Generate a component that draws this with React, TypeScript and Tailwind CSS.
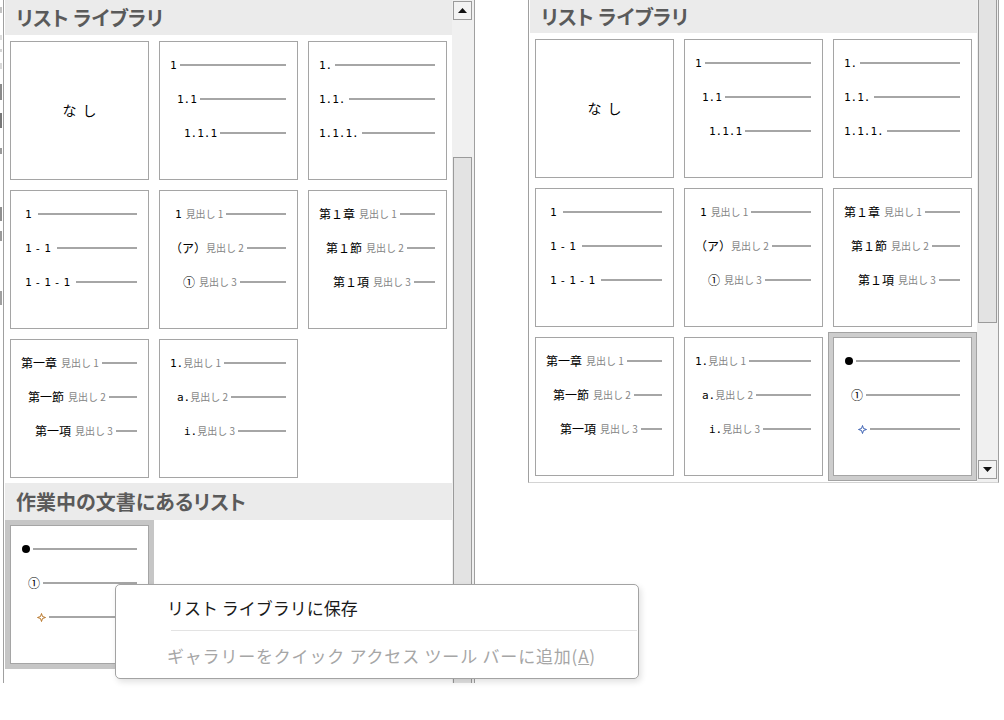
import React from 'react';

type Part = { t: string; k: 'b' | 'd' | 'k' | 'g' | 'G' | 'dot' | 'starO' | 'starB' };
type Row = { pl: string; parts: Part[] };

const partClass: Record<string, string> = {
	b: "font-['DejaVu_Sans_Mono','Noto_Sans_CJK_JP',monospace] text-[11px] leading-none text-black",
	d: "font-['DejaVu_Sans_Mono','Noto_Sans_CJK_JP',monospace] text-[11px] leading-none tracking-[3px] text-black",
	k: "font-['Noto_Sans_CJK_JP',sans-serif] text-[12px] leading-none text-black",
	g: "ml-[4px] font-['Noto_Sans_CJK_JP',sans-serif] text-[10px] leading-none text-[#858585]",
	G: "font-['Noto_Sans_CJK_JP',sans-serif] text-[10px] leading-none text-[#858585]",
};

const numbered: Row[] = [
	{ pl: 'pl-[10px]', parts: [{ t: '1', k: 'b' }] },
	{ pl: 'pl-[17px]', parts: [{ t: '1.1', k: 'b' }] },
	{ pl: 'pl-[24px]', parts: [{ t: '1.1.1', k: 'b' }] },
];

const numberedDot: Row[] = [
	{ pl: 'pl-[10px]', parts: [{ t: '1.', k: 'b' }] },
	{ pl: 'pl-[10px]', parts: [{ t: '1.1.', k: 'b' }] },
	{ pl: 'pl-[10px]', parts: [{ t: '1.1.1.', k: 'b' }] },
];

const dashed: Row[] = [
	{ pl: 'pl-[14px]', parts: [{ t: '1', k: 'd' }] },
	{ pl: 'pl-[14px]', parts: [{ t: '1-1', k: 'd' }] },
	{ pl: 'pl-[14px]', parts: [{ t: '1-1-1', k: 'd' }] },
];

const headingKana: Row[] = [
	{ pl: 'pl-[15px]', parts: [{ t: '1', k: 'b' }, { t: '見出し 1', k: 'g' }] },
	{ pl: 'pl-[10px]', parts: [{ t: '（ア）', k: 'k' }, { t: '見出し 2', k: 'G' }] },
	{ pl: 'pl-[23px]', parts: [{ t: '①', k: 'k' }, { t: '見出し 3', k: 'g' }] },
];

const chapterNum: Row[] = [
	{ pl: 'pl-[10px]', parts: [{ t: '第１章', k: 'k' }, { t: '見出し 1', k: 'g' }] },
	{ pl: 'pl-[17px]', parts: [{ t: '第１節', k: 'k' }, { t: '見出し 2', k: 'g' }] },
	{ pl: 'pl-[24px]', parts: [{ t: '第１項', k: 'k' }, { t: '見出し 3', k: 'g' }] },
];

const chapterKanji: Row[] = [
	{ pl: 'pl-[10px]', parts: [{ t: '第一章', k: 'k' }, { t: '見出し 1', k: 'g' }] },
	{ pl: 'pl-[17px]', parts: [{ t: '第一節', k: 'k' }, { t: '見出し 2', k: 'g' }] },
	{ pl: 'pl-[24px]', parts: [{ t: '第一項', k: 'k' }, { t: '見出し 3', k: 'g' }] },
];

const alpha: Row[] = [
	{ pl: 'pl-[10px]', parts: [{ t: '1.', k: 'b' }, { t: '見出し 1', k: 'G' }] },
	{ pl: 'pl-[17px]', parts: [{ t: 'a.', k: 'b' }, { t: '見出し 2', k: 'G' }] },
	{ pl: 'pl-[24px]', parts: [{ t: 'i.', k: 'b' }, { t: '見出し 3', k: 'G' }] },
];

const bulletsOrange: Row[] = [
	{ pl: 'pl-[11px]', parts: [{ t: '', k: 'dot' }] },
	{ pl: 'pl-[17px]', parts: [{ t: '①', k: 'k' }] },
	{ pl: 'pl-[26px]', parts: [{ t: '', k: 'starO' }] },
];

const bulletsBlue: Row[] = [
	{ pl: 'pl-[11px]', parts: [{ t: '', k: 'dot' }] },
	{ pl: 'pl-[17px]', parts: [{ t: '①', k: 'k' }] },
	{ pl: 'pl-[24px]', parts: [{ t: '', k: 'starB' }] },
];

const Star = ({ color }: { color: string }) => (
	<svg width="9" height="9" viewBox="0 0 9 9">
		<path
			d="M4.5 0.5 L5.5 3.5 L8.5 4.5 L5.5 5.5 L4.5 8.5 L3.5 5.5 L0.5 4.5 L3.5 3.5 Z"
			fill="white"
			stroke={color}
			strokeWidth="1"
		/>
	</svg>
);

const PartView = ({ p }: { p: Part }) => {
	if (p.k === 'dot') return <span className="h-[8px] w-[8px] rounded-full bg-black" />;
	if (p.k === 'starO') return <Star color="#b9772a" />;
	if (p.k === 'starB') return <Star color="#3d62b3" />;
	return <span className={partClass[p.k]}>{p.t}</span>;
};

const Cell = ({ rows, ring, none }: { rows?: Row[]; ring?: string; none?: boolean }) => (
	<div className={`h-[139px] w-[139px] border border-[#a5a5a5] bg-white ${ring ?? ''}`}>
		{none && (
			<div className="flex h-full items-center justify-center pl-[6px] font-['Noto_Sans_CJK_JP',sans-serif] text-[14px] tracking-[6px] text-black">
				なし
			</div>
		)}
		{rows && (
			<div className="flex flex-col pt-[6px] pr-[11px]">
				{rows.map((r, i) => (
					<div key={i} className={`flex h-[34px] items-center whitespace-nowrap ${r.pl}`}>
						{r.parts.map((p, j) => (
							<PartView key={j} p={p} />
						))}
						<div className="ml-[3px] h-[2px] flex-1 bg-[#a6a6a6]" />
					</div>
				))}
			</div>
		)}
	</div>
);

const Header = ({ title, className }: { title: string; className: string }) => (
	<div
		className={`flex items-center bg-[#ebebeb] pl-[11px] font-['Noto_Sans_CJK_JP',sans-serif] text-[20px] font-bold text-[#5a5a5a] [font-feature-settings:'palt'] ${className}`}
	>
		{title}
	</div>
);

const Arrow = ({ up }: { up?: boolean }) => (
	<svg width="9" height="5" viewBox="0 0 9 5">
		<path d={up ? 'M0 5 L4.5 0 L9 5 Z' : 'M0 0 L4.5 5 L9 0 Z'} fill="#111" />
	</svg>
);

const marks = [
	'mt-[7px] h-[6px] bg-[#c4c4c4]',
	'mt-[22px] h-[5px] bg-[#dedede]',
	'mt-[9px] h-[3px] bg-[#d4d4d4]',
	'mt-[11px] h-[6px] bg-[#d9d9d9]',
	'mt-[15px] h-[16px] bg-[#8a8a8a]',
	'mt-[13px] h-[15px] bg-[#777777]',
	'mt-[20px] h-[6px] bg-[#9a9a9a]',
	'mt-[53px] h-[14px] bg-[#8f8f8f]',
	'mt-[10px] h-[10px] bg-[#9a9a9a]',
	'mt-[50px] h-[14px] bg-[#a0a0a0]',
];

const LeftPanel = () => (
	<div className="flex h-[683px] w-[475px] shrink-0">
		<div className="flex w-[3px] flex-col">
			{marks.map((m, i) => (
				<div key={i} className={`w-[2px] ${m}`} />
			))}
		</div>
		<div className="w-px bg-[#a0a0a0]" />
		<div className="w-px" />
		<div className="flex w-[447px] flex-col">
			<Header title="リスト ライブラリ" className="h-[35px]" />
			<div className="mt-[6px] grid grid-cols-[repeat(3,139px)] gap-[10px] px-[5px]">
				<Cell none />
				<Cell rows={numbered} />
				<Cell rows={numberedDot} />
				<Cell rows={dashed} />
				<Cell rows={headingKana} />
				<Cell rows={chapterNum} />
				<Cell rows={chapterKanji} />
				<Cell rows={alpha} />
			</div>
			<Header title="作業中の文書にあるリスト" className="mt-[5px] h-[37px]" />
			<div className="pl-[5px] pt-[5px]">
				<Cell rows={bulletsOrange} ring="shadow-[0_0_0_5px_#c6c6c6]" />
			</div>
		</div>
		<div className="flex w-[22px] flex-col bg-[#f0f0f0]">
			<div className="ml-px mt-[1px] flex h-[19px] w-[19px] items-center justify-center border border-[#9b9b9b] bg-[#f3f3f3]">
				<Arrow up />
			</div>
			<div className="ml-px mt-[137px] w-[19px] flex-1 border border-b-0 border-[#9b9b9b] bg-[#e3e3e3]" />
		</div>
		<div className="w-px bg-[#a0a0a0]" />
	</div>
);

const RightPanel = () => (
	<div className="flex h-[483px] w-[471px] shrink-0 border-x border-b border-x-[#a0a0a0] border-b-[#d4d4d4]">
		<div className="w-px" />
		<div className="flex w-[447px] flex-col">
			<Header title="リスト ライブラリ" className="h-[33px]" />
			<div className="mt-[6px] grid grid-cols-[repeat(3,139px)] gap-[10px] px-[5px]">
				<Cell none />
				<Cell rows={numbered} />
				<Cell rows={numberedDot} />
				<Cell rows={dashed} />
				<Cell rows={headingKana} />
				<Cell rows={chapterNum} />
				<Cell rows={chapterKanji} />
				<Cell rows={alpha} />
				<Cell rows={bulletsBlue} ring="shadow-[0_0_0_4px_#cdcdcd,0_0_0_5px_#a3a3a3]" />
			</div>
		</div>
		<div className="flex w-[21px] flex-col bg-[#f0f0f0]">
			<div className="ml-px h-[323px] w-[19px] border border-t-0 border-[#9b9b9b] bg-[#e3e3e3]" />
			<div className="ml-px mt-[137px] flex h-[19px] w-[19px] items-center justify-center border border-[#9b9b9b] bg-[#f3f3f3]">
				<Arrow />
			</div>
		</div>
	</div>
);

const ContextMenu = () => (
	<div className="absolute left-[115px] top-[584px] flex h-[95px] w-[524px] flex-col rounded-[5px] border border-[#a3a3a3] bg-white font-['Noto_Sans_CJK_JP',sans-serif] text-[17px] shadow-[2px_3px_6px_rgba(0,0,0,0.12)]">
		<div className="flex h-[45px] items-center pl-[51px] text-[#1a1a1a]">リスト ライブラリに保存</div>
		<div className="ml-[55px] mr-px h-px bg-[#e3e3e3]" />
		<div className="flex h-[47px] items-center pl-[51px] pt-[2px] tracking-[0.8px] text-[#a6a6a6]">
			ギャラリーをクイック アクセス ツール バーに追加(<span className="underline">A</span>)
		</div>
	</div>
);

export default function App() {
	return (
		<div className="relative h-[720px] w-[1004px] overflow-hidden bg-white">
			<div className="flex items-start gap-[53px]">
				<LeftPanel />
				<RightPanel />
			</div>
			<ContextMenu />
		</div>
	);
}
